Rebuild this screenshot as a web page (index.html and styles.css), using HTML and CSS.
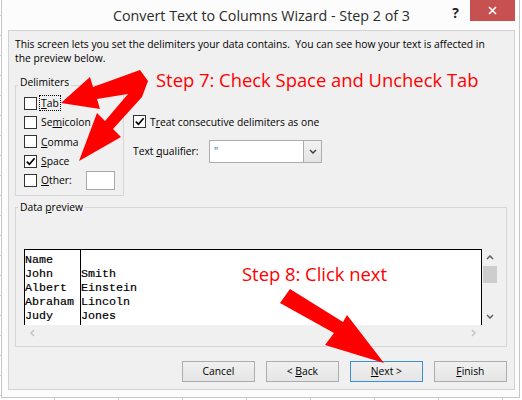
FILE: index.html
```html
<!DOCTYPE html>
<html>
	<head>
		<meta charset="utf-8">
		<title>Convert Text to Columns Wizard</title>
		<link rel="stylesheet" href="styles.css">
	</head>
	<body>
		<div class="window">
			<div class="titlebar">
				<div class="title">Convert Text to Columns Wizard - Step 2 of 3</div>
				<div class="controls">
					<div class="help">?</div>
					<div class="close">
						<svg width="9" height="9" viewBox="0 0 9 9"><path d="M1 1L8 8M8 1L1 8" stroke="#fff" stroke-width="1.6"/></svg>
					</div>
				</div>
			</div>
			<div class="panel">
				<p class="intro">This screen lets you set the delimiters your data contains.&nbsp; You can see how your text is affected in<br>the preview below.</p>
				<div class="options">
					<fieldset class="group delims">
						<legend>Delimiters</legend>
						<div class="rows">
							<div class="check"><span class="box"></span><span class="lbl focus"><u>T</u>ab</span></div>
							<div class="check"><span class="box"></span><span class="lbl">Se<u>m</u>icolon</span></div>
							<div class="check"><span class="box"></span><span class="lbl"><u>C</u>omma</span></div>
							<div class="check"><span class="box"><svg width="11" height="11" viewBox="0 0 11 11"><path d="M1.8 5.6L4.4 8.3L9.6 2.2" fill="none" stroke="#000" stroke-width="1.7"/></svg></span><span class="lbl"><u>S</u>pace</span></div>
							<div class="check"><span class="box"></span><span class="lbl"><u>O</u>ther:</span><span class="textbox"></span></div>
						</div>
					</fieldset>
					<div class="side">
						<div class="check"><span class="box"><svg width="11" height="11" viewBox="0 0 11 11"><path d="M1.8 5.6L4.4 8.3L9.6 2.2" fill="none" stroke="#000" stroke-width="1.7"/></svg></span><span class="lbl">T<u>r</u>eat consecutive delimiters as one</span></div>
						<div class="qualifier">
							<span class="qlabel">Text <u>q</u>ualifier:</span>
							<div class="combo">
								<span class="value">"</span>
								<span class="drop"><svg width="8" height="5" viewBox="0 0 8 5"><path d="M1 1L4 4L7 1" fill="none" stroke="#444" stroke-width="1.5"/></svg></span>
							</div>
						</div>
					</div>
				</div>
				<fieldset class="group preview">
					<legend>Data <u>p</u>review</legend>
					<div class="pgrid">
						<div class="ptable">
							<div class="pcol first">Name
John
Albert
Abraham
Judy</div>
							<div class="pcol">
Smith
Einstein
Lincoln
Jones</div>
						</div>
						<div class="vscroll">
							<span class="sbtn"><svg width="8" height="5" viewBox="0 0 8 5"><path d="M1 4L4 1L7 4" fill="none" stroke="#606060" stroke-width="1.5"/></svg></span>
							<span class="thumb"></span>
							<span class="sbtn"><svg width="8" height="5" viewBox="0 0 8 5"><path d="M1 1L4 4L7 1" fill="none" stroke="#606060" stroke-width="1.5"/></svg></span>
						</div>
						<div class="hscroll">
							<span class="sbtn"><svg width="5" height="8" viewBox="0 0 5 8"><path d="M4 1L1 4L4 7" fill="none" stroke="#c4c4c4" stroke-width="1.5"/></svg></span>
							<span class="sbtn"><svg width="5" height="8" viewBox="0 0 5 8"><path d="M1 1L4 4L1 7" fill="none" stroke="#c4c4c4" stroke-width="1.5"/></svg></span>
						</div>
					</div>
				</fieldset>
				<div class="buttons">
					<button class="btn">Cancel</button>
					<button class="btn">&lt; <u>B</u>ack</button>
					<button class="btn default"><u>N</u>ext &gt;</button>
					<button class="btn"><u>F</u>inish</button>
				</div>
			</div>
		</div>

		<!-- tutorial annotations drawn over the dialog -->
		<svg class="arrows" width="522" height="400" viewBox="0 0 522 400">
			<polygon points="61,103 90,77 93,87 140,70 148,81 142,97 113,129 121,137 79,161 97,113 105,121 128,94 97,99 100,109" fill="#ff0000"/>
			<polygon points="290,289 343,322 347,315 384,363 325,345 334,333 280,303" fill="#ff0000"/>
		</svg>
		<div class="note note7">Step 7: Check Space and Uncheck Tab</div>
		<div class="note note8">Step 8: Click next</div>
	</body>
</html>
```

FILE: styles.css
```css
body {
	margin: 0;
	width: 522px;
	height: 400px;
	overflow: hidden;
	position: relative;
	font-family: "Open Sans", "Noto Sans", sans-serif;
	font-size: 10.3px;
	line-height: 14px;
	color: #000;
	background:
		repeating-linear-gradient(to bottom, transparent 0 15px, #d4d4d4 15px 16px, transparent 16px 20px) left top / 1px 100% no-repeat,
		repeating-linear-gradient(to right, transparent 0 54px, #d4d4d4 54px 55px, transparent 55px 64px) #fff;
}
u {
	text-underline-offset: 1px;
}

.window {
	margin-left: 1px;
	width: 519px;
	height: 398px;
	box-sizing: border-box;
	border: 1px solid #c6c6c6;
	border-top: 0;
	padding: 0 4px 7px 6px;
	background: #fcfcfc;
}
.titlebar {
	height: 30px;
	display: grid;
	grid-template-columns: 1fr auto 1fr;
}
.title {
	grid-column: 2;
	font-size: 14.3px;
	line-height: 28px;
	padding-top: 2px;
	color: #2b2b2b;
	white-space: nowrap;
}
.controls {
	grid-column: 3;
	justify-self: end;
	display: flex;
	align-items: flex-start;
}
.help {
	font-weight: bold;
	font-size: 14px;
	line-height: 14px;
	margin: 6px 11px 0 0;
	color: #222;
}
.close {
	width: 45px;
	height: 21px;
	background: #c75050;
	display: flex;
	align-items: center;
	justify-content: center;
}

.panel {
	height: 360px;
	box-sizing: border-box;
	border: 1px solid #d2d2d2;
	background: #f0f0f0;
}
.intro {
	margin: 0;
	padding: 6px 6px 0;
	white-space: nowrap;
}

.group {
	margin: 0;
	min-width: 0;
	border: 1px solid #d5d5d5;
}
.group legend {
	padding: 0 2px;
	margin-left: -6px;
	line-height: 14px;
}
.options {
	display: flex;
	margin: 10px 0 0 6px;
}
.delims {
	width: 109px;
	box-sizing: border-box;
	padding: 0 8px 5px;
}
.delims legend {
	padding-bottom: 7px;
}
.rows {
	display: grid;
	grid-auto-rows: 19.3px;
	margin-top: -2.5px;
}
.check {
	display: flex;
	align-items: center;
	white-space: nowrap;
}
.box {
	flex: none;
	width: 13px;
	height: 13px;
	box-sizing: border-box;
	border: 1px solid #333;
	background: #fff;
	margin-right: 2px;
	display: flex;
	align-items: center;
	justify-content: center;
}
.lbl {
	border: 1px dotted transparent;
	padding: 0 1px;
}
.lbl.focus {
	border-color: #000;
}
.textbox {
	margin-left: auto;
	width: 29px;
	height: 19px;
	box-sizing: border-box;
	border: 1px solid #a8a8a8;
	background: #fff;
}
.side {
	margin-left: 9px;
	padding-top: 37px;
}
.side .check {
	height: 19.3px;
}
.qualifier {
	display: flex;
	align-items: center;
	margin-top: 8.5px;
}
.qlabel {
	width: 76px;
}
.combo {
	width: 113px;
	height: 23px;
	box-sizing: border-box;
	border: 1px solid #acacac;
	background: #fff;
	display: flex;
}
.combo .value {
	flex: 1;
	padding-left: 4px;
	line-height: 21px;
	color: #1e50b4;
}
.combo .drop {
	width: 17px;
	border-left: 1px solid #acacac;
	background: linear-gradient(#f2f2f2, #e4e4e4);
	display: flex;
	align-items: center;
	justify-content: center;
}

.preview {
	margin: 4.5px 0 0 6px;
	width: 492px;
	box-sizing: border-box;
	padding: 35px 8px 5px;
}
.pgrid {
	display: grid;
	grid-template-columns: 458px 16px;
	grid-template-rows: 76px 16px;
}
.ptable {
	display: flex;
	border: 1px solid #000;
	border-bottom: 0;
	background: #fff;
	font-family: "Liberation Mono", monospace;
	font-size: 11.67px;
	line-height: 14px;
	-webkit-text-stroke: 0.2px #000;
}
.pcol {
	padding-top: 3px;
	white-space: pre;
}
.pcol.first {
	width: 55px;
	border-right: 1px solid #000;
}
.vscroll {
	display: flex;
	flex-direction: column;
}
.sbtn {
	display: flex;
	align-items: center;
	justify-content: center;
}
.vscroll .sbtn {
	height: 17px;
}
.thumb {
	height: 17px;
	margin: 0 1px;
	background: #cdcdcd;
}
.vscroll .sbtn:last-child {
	margin-top: auto;
}
.hscroll {
	display: flex;
	justify-content: space-between;
}
.hscroll .sbtn {
	width: 17px;
}

.buttons {
	display: flex;
	justify-content: flex-end;
	gap: 10.7px;
	margin-top: 13.2px;
	padding-right: 7px;
}
.btn {
	width: 73.3px;
	height: 21px;
	box-sizing: border-box;
	padding: 0;
	border: 1px solid #acacac;
	background: linear-gradient(#f0f0f0, #e5e5e5);
	font: inherit;
	line-height: 19px;
	color: #000;
}
.btn.default {
	border-color: #3e8ddd;
}

.arrows {
	position: absolute;
	left: 0;
	top: 0;
	pointer-events: none;
}
.note {
	position: absolute;
	color: #ff0000;
	font-family: "Open Sans", sans-serif;
	font-size: 18.4px;
	line-height: 20px;
	white-space: nowrap;
}
.note7 {
	left: 156px;
	top: 69.6px;
}
.note8 {
	left: 242px;
	top: 264px;
}
```
